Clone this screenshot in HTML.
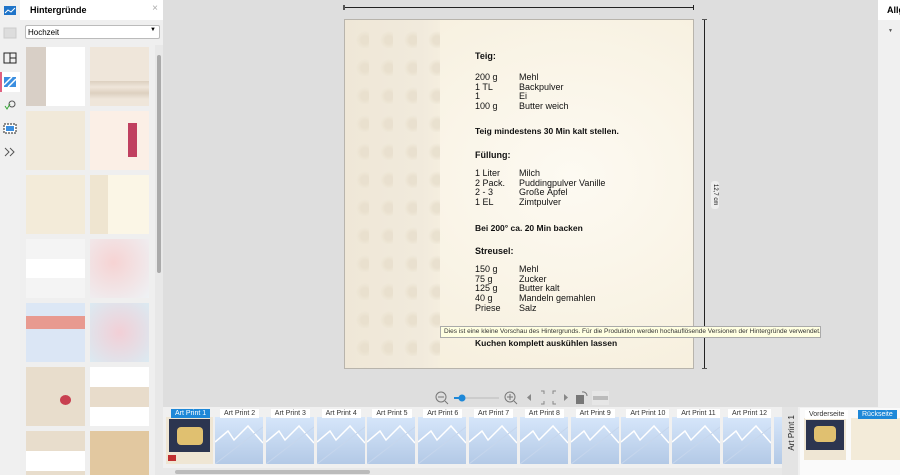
<!DOCTYPE html><html><head><meta charset="utf-8"><style>
*{margin:0;padding:0;box-sizing:border-box}
html{width:900px;height:475px;overflow:hidden}
body{width:900px;height:475px;overflow:hidden;background:#dedede;font-family:"Liberation Sans",sans-serif;position:relative}
.a{position:absolute}
.th{position:absolute;width:59px;height:59px}
.rl{font-size:9px;color:#111;position:absolute}
.ap{position:absolute;top:409px;height:9px;font-size:7px;line-height:9px;background:#fff;color:#333;padding:0 4px;white-space:nowrap}
.pt{position:absolute;top:417px;width:48px;height:47px;background:linear-gradient(180deg,#d6e6fa,#b3c9e6);overflow:hidden}
</style></head><body>
<div class="a" style="left:0;top:0;width:20px;height:475px;background:#f0f0f0"></div>
<svg class="a" style="left:0;top:0" width="20" height="170">
<rect x="4" y="6" width="12" height="9" fill="#1e73c8"/><path d="M5 13l3-3 3 2 4-4" stroke="#fff" fill="none"/>
<rect x="4" y="28" width="12" height="10" fill="#ddd" stroke="#ccc"/>
<rect x="4" y="53" width="12" height="10" fill="none" stroke="#222"/><path d="M10 53v10M10 58h6" stroke="#222"/>
<rect x="0" y="72" width="20" height="20" fill="#fff"/><rect x="0" y="72" width="2" height="20" fill="#e06080"/>
<rect x="4" y="77" width="12" height="10" fill="#3a8ee0"/><path d="M4 85l8-8M8 87l8-8" stroke="#fff" stroke-width="1.5"/>
<circle cx="12" cy="104" r="3" fill="none" stroke="#555"/><path d="M5 106l2 3 3-5" stroke="#3a3" fill="none"/>
<rect x="4" y="124" width="12" height="9" fill="#fff" stroke="#222" stroke-dasharray="2 1"/><rect x="6" y="126" width="8" height="5" fill="#3a8ee0"/>
<path d="M5 148l4 4-4 4M10 148l4 4-4 4" stroke="#555" fill="none"/>
</svg>
<div class="a" style="left:20px;top:0;width:143px;height:475px;background:#efefef;overflow:hidden">
<div class="a" style="left:0;top:0;width:143px;height:20px;background:#fff;font-size:9px;font-weight:bold;padding:5px 0 0 10px">Hintergründe<span style="position:absolute;right:5px;top:3px;color:#aaa;font-weight:normal;font-size:10px">×</span></div>
<div class="a" style="left:5px;top:25px;width:135px;height:14px;background:#fff;border:1px solid #bbb;border-radius:2px;font-size:8px;padding:2px 2px">Hochzeit<span style="position:absolute;right:3px;top:1px;font-size:6px">▼</span></div>
<div class="a" style="left:135px;top:45px;width:8px;height:430px;background:#e8e8e8"></div>
<div class="a" style="left:137px;top:55px;width:4px;height:218px;background:#aaa;border-radius:2px"></div>
<div class="th" style="left:6px;top:47px;background:linear-gradient(90deg,#d8cfc6 0 20px,#fff 20px)"></div>
<div class="th" style="left:70px;top:47px;background:linear-gradient(#efe6da 0 34px,#ddd0c0 34px,#efe6da 40px,#ddd0c0 46px,#efe6da 52px)"></div>
<div class="th" style="left:6px;top:111px;background:#f1e9d9"></div>
<div class="th" style="left:70px;top:111px;background:#fbefe6"><div class="a" style="left:38px;top:12px;width:9px;height:34px;background:#c04060"></div></div>
<div class="th" style="left:6px;top:175px;background:#f3ebd9"></div>
<div class="th" style="left:70px;top:175px;background:linear-gradient(90deg,#efe5d0 0 18px,#fbf6e6 18px)"></div>
<div class="th" style="left:6px;top:239px;background:linear-gradient(#f4f4f4 0 20px,#fff 20px 39px,#f4f4f4 39px)"></div>
<div class="th" style="left:70px;top:239px;background:radial-gradient(circle at 40% 40%,#f6d3d3,#eef2f5)"></div>
<div class="th" style="left:6px;top:303px;background:linear-gradient(#dce7f5 0 13px,#e89a90 13px 26px,#dbe6f5 26px)"></div>
<div class="th" style="left:70px;top:303px;background:radial-gradient(circle at 50% 50%,#f2cfd6,#dbeaf2)"></div>
<div class="th" style="left:6px;top:367px;background:#e8ddcc"><div class="a" style="left:34px;top:28px;width:11px;height:10px;background:#c84050;border-radius:50%"></div></div>
<div class="th" style="left:70px;top:367px;background:linear-gradient(#fff 0 20px,#e8dccb 20px 40px,#fff 40px)"></div>
<div class="th" style="left:6px;top:431px;background:linear-gradient(#e8ddcc 0 20px,#fff 20px 40px,#e8ddcc 40px)"></div>
<div class="th" style="left:70px;top:431px;background:#e2c8a0"></div>
</div>
<div class="a" style="left:878px;top:0;width:22px;height:407px;background:#f0f0f0"></div>
<div class="a" style="left:878px;top:0;width:22px;height:20px;background:#fff;font-size:9px;font-weight:bold;padding:5px 0 0 9px;overflow:hidden">Allg</div>
<div class="a" style="left:888px;top:28px;font-size:5px;color:#555">▼</div>
<div class="a" style="left:344px;top:7px;width:350px;height:1px;background:#222"></div>
<div class="a" style="left:343px;top:5px;width:2px;height:5px;background:#555"></div>
<div class="a" style="left:693px;top:5px;width:1px;height:5px;background:#222"></div>
<div class="a" style="left:704px;top:19px;width:1px;height:350px;background:#222"></div>
<div class="a" style="left:702px;top:19px;width:5px;height:1px;background:#555"></div>
<div class="a" style="left:702px;top:368px;width:5px;height:1px;background:#555"></div>
<div class="a" style="left:711px;top:181px;width:8px;height:28px;background:#eee;border-radius:3px;font-size:6px;writing-mode:vertical-rl;text-align:center;line-height:8px">12,7 cm</div>
<div class="a" style="left:344px;top:19px;width:350px;height:350px;border:1px solid #b8b4ac;background:radial-gradient(ellipse at 65% 45%,#fdfaf2,#f5edd9)"></div>
<div class="a" style="left:345px;top:20px;width:95px;height:348px;background:radial-gradient(circle at 20px 20px,#e8dfcd 4px,transparent 9px) 0 0/24px 28px,linear-gradient(90deg,#efe7d7,#f1eadc 80%,#f5eedf);opacity:.9"></div>
<div class="rl" style="left:475px;top:51px;font-weight:bold">Teig:</div>
<div class="rl" style="left:475px;top:73px;line-height:9.7px">200 g<br>1 TL<br>1<br>100 g</div>
<div class="rl" style="left:519px;top:73px;line-height:9.7px">Mehl<br>Backpulver<br>Ei<br>Butter weich</div>
<div class="rl" style="left:475px;top:126px;font-weight:bold;font-size:8.5px">Teig mindestens 30 Min kalt stellen.</div>
<div class="rl" style="left:475px;top:150px;font-weight:bold">Füllung:</div>
<div class="rl" style="left:475px;top:169px;line-height:9.7px">1 Liter<br>2 Pack.<br>2 - 3<br>1 EL</div>
<div class="rl" style="left:519px;top:169px;line-height:9.7px">Milch<br>Puddingpulver Vanille<br>Große Äpfel<br>Zimtpulver</div>
<div class="rl" style="left:475px;top:223px;font-weight:bold;font-size:8.5px">Bei 200° ca. 20 Min backen</div>
<div class="rl" style="left:475px;top:246px;font-weight:bold">Streusel:</div>
<div class="rl" style="left:475px;top:265px;line-height:9.7px">150 g<br>75 g<br>125 g<br>40 g<br>Priese</div>
<div class="rl" style="left:519px;top:265px;line-height:9.7px">Mehl<br>Zucker<br>Butter kalt<br>Mandeln gemahlen<br>Salz</div>
<div class="rl" style="left:475px;top:338px;font-weight:bold;font-size:8.5px">Kuchen komplett auskühlen lassen</div>
<div class="a" style="left:440px;top:326px;width:381px;height:12px;background:#ffffe1;border:1px solid #aaa;font-size:6.5px;line-height:10px;padding-left:3px;white-space:nowrap;overflow:hidden;color:#333">Dies ist eine kleine Vorschau des Hintergrunds. Für die Produktion werden hochauflösende Versionen der Hintergründe verwendet.</div>
<svg class="a" style="left:430px;top:388px" width="185" height="20">
<circle cx="11" cy="9" r="5" fill="none" stroke="#777"/><path d="M8 9h6M15 13l3 3" stroke="#777"/>
<path d="M24 10h45" stroke="#bbb"/><path d="M24 10h8" stroke="#1e88d8" stroke-width="2"/><circle cx="32" cy="10" r="3.5" fill="#1e88d8"/>
<circle cx="80" cy="9" r="5" fill="none" stroke="#777"/><path d="M77 9h6M80 6v6M84 13l3 3" stroke="#777"/>
<path d="M101 6v7l-4-3.5z" fill="#888"/>
<path d="M111 3h3v3M126 3h-3v3M111 16h3v-3M126 16h-3v-3" stroke="#888" fill="none"/>
<path d="M134 6v7l4-3.5z" fill="#888"/>
<rect x="146" y="7" width="8" height="9" fill="#777"/><path d="M152 4a4 4 0 0 1 5 4" stroke="#777" fill="none"/>
<rect x="162" y="3" width="17" height="14" fill="#e6e6e6"/><rect x="163" y="8" width="15" height="4" fill="#bbb"/>
</svg>
<div class="a" style="left:163px;top:407px;width:619px;height:61px;background:#f0f0f0"></div>
<div class="a" style="left:163px;top:468px;width:619px;height:7px;background:#e8e8e8"></div>
<div class="a" style="left:175px;top:470px;width:195px;height:4px;background:#bbb;border-radius:2px"></div>
<div class="a" style="left:166px;top:417px;width:47px;height:47px;background:#efe6d4"><div class="a" style="left:3px;top:2px;width:41px;height:33px;background:#2c3550"><div class="a" style="left:8px;top:8px;width:26px;height:18px;background:#e0c070;border-radius:4px"></div></div><div class="a" style="left:2px;top:38px;width:8px;height:6px;background:#c03030"></div></div>
<div class="ap" style="left:171px;background:#1e88d8;color:#fff">Art Print 1</div>
<div id="prints"></div>
<script>
var h='';for(var i=2;i<=12;i++){var x=215+(i-2)*50.8;h+='<div class="pt" style="left:'+x+'px"><svg width="48" height="47"><path d="M0 25l13-11 6 9 14-14 15 17" stroke="#fff" stroke-width="1.5" fill="none"/><path d="M0 47L48 10" stroke="#c6d6ec" fill="none"/></svg></div><div class="ap" style="left:'+(x+5)+'px">Art Print '+i+'</div>';}
h+='<div class="pt" style="left:774px;width:8px"></div>';
document.getElementById('prints').innerHTML=h;
</script>
<div class="a" style="left:782px;top:407px;width:118px;height:68px;background:#f0f0f0"></div>
<div class="a" style="left:782px;top:407px;width:16px;height:68px;background:#e4e4e4"></div>
<div class="a" style="left:787px;top:415px;font-size:8px;writing-mode:vertical-rl;transform:rotate(180deg);color:#222">Art Print 1</div>
<div class="a" style="left:800px;top:408px;width:100px;height:67px;background:#fafafa;overflow:hidden"></div>
<div class="a" style="left:804px;top:418px;width:42px;height:42px;background:#efe6d4"><div class="a" style="left:2px;top:2px;width:38px;height:30px;background:#2c3550"><div class="a" style="left:8px;top:6px;width:22px;height:16px;background:#e0c070;border-radius:4px"></div></div></div>
<div class="ap" style="left:805px;top:410px">Vorderseite</div>
<div class="a" style="left:851px;top:418px;width:49px;height:42px;background:#f3ebd9"></div>
<div class="ap" style="left:858px;top:410px;background:#1e88d8;color:#fff">Rückseite</div>
</body></html>
